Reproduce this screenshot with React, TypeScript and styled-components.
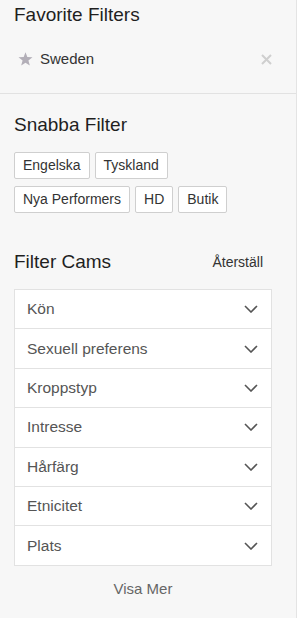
import React from "react";
import styled, { createGlobalStyle } from "styled-components";

const GlobalStyle = createGlobalStyle`
  html, body {
    margin: 0;
    padding: 0;
    background: #f7f7f7;
  }
  body {
    font-family: "Liberation Sans", Arial, Helvetica, sans-serif;
    -webkit-font-smoothing: antialiased;
  }
`;

const quickFilters = [
  ["Engelska", "Tyskland"],
  ["Nya Performers", "HD", "Butik"],
];

const camFilters = [
  "Kön",
  "Sexuell preferens",
  "Kroppstyp",
  "Intresse",
  "Hårfärg",
  "Etnicitet",
  "Plats",
];

const StarIcon = () => (
  <svg width="15" height="14" viewBox="0 0 24 23">
    <polygon
      points="12,0.5 15,8.4 23.5,8.7 16.8,14 19.1,22.3 12,17.5 4.9,22.3 7.2,14 0.5,8.7 9,8.4"
      fill="#b3afb8"
    />
  </svg>
);

const CloseIcon = () => (
  <svg width="11" height="11" viewBox="0 0 11 11">
    <path d="M1 1 L10 10 M10 1 L1 10" stroke="#cfcfcf" strokeWidth="2" />
  </svg>
);

const Chevron = () => (
  <svg width="14" height="8" viewBox="0 0 14 8">
    <polyline
      points="1,1 7,7 13,1"
      fill="none"
      stroke="#555"
      strokeWidth="1.6"
    />
  </svg>
);

const App: React.FC = () => {
  return (
    <>
      <GlobalStyle />
      <StyleSidebar>
        <StyleFavorites>
          <StyleHeading>Favorite Filters</StyleHeading>
          <StyleFavRow>
            <StyleFavName>
              <StarIcon />
              <span>Sweden</span>
            </StyleFavName>
            <CloseIcon />
          </StyleFavRow>
        </StyleFavorites>

        <StyleSection>
          <StyleHeading>Snabba Filter</StyleHeading>
          <StyleTagWrap>
            {quickFilters.map((row, i) => (
              <StyleTagRow key={i}>
                {row.map((tag) => (
                  <StyleTag key={tag}>{tag}</StyleTag>
                ))}
              </StyleTagRow>
            ))}
          </StyleTagWrap>
        </StyleSection>

        <StyleSection>
          <StyleHeaderRow>
            <StyleHeading>Filter Cams</StyleHeading>
            <StyleReset>Återställ</StyleReset>
          </StyleHeaderRow>
          <StyleAccordion>
            {camFilters.map((item) => (
              <StyleAccordionRow key={item}>
                <span>{item}</span>
                <Chevron />
              </StyleAccordionRow>
            ))}
          </StyleAccordion>
          <StyleMore>Visa Mer</StyleMore>
        </StyleSection>
      </StyleSidebar>
    </>
  );
};

const StyleSidebar = styled.div`
  width: 296px;
  min-height: 618px;
  background: #f7f7f7;
  border-right: 1px solid #e4e4e4;
  box-sizing: content-box;
`;

const StyleHeading = styled.h2`
  margin: 0;
  font-size: 19px;
  font-weight: 400;
  line-height: 24px;
  color: #1f1f1f;
`;

const StyleFavorites = styled.div`
  padding: 3px 24px 24px 14px;
  border-bottom: 1px solid #e2e2e2;
`;

const StyleFavRow = styled.div`
  margin-top: 22px;
  height: 20px;
  display: flex;
  align-items: center;
  justify-content: space-between;
  padding-left: 4px;
`;

const StyleFavName = styled.div`
  display: flex;
  align-items: center;
  gap: 7px;
  font-size: 15px;
  line-height: 20px;
  color: #333;
  svg {
    margin-top: -1px;
  }
`;

const StyleSection = styled.div`
  padding: 19px 24px 0 14px;
`;

const StyleTagWrap = styled.div`
  margin-top: 15px;
  display: flex;
  flex-direction: column;
  gap: 7px;
  margin-bottom: 18px;
`;

const StyleTagRow = styled.div`
  display: flex;
  gap: 5px;
`;

const StyleTag = styled.span`
  display: inline-block;
  padding: 0 8px;
  height: 25px;
  line-height: 25px;
  font-size: 14px;
  color: #333;
  background: #fff;
  border: 1px solid #cfcfcf;
  border-radius: 2px;
`;

const StyleHeaderRow = styled.div`
  display: flex;
  align-items: center;
  justify-content: space-between;
  padding-right: 9px;
`;

const StyleReset = styled.span`
  font-size: 14px;
  line-height: 16px;
  color: #333;
`;

const StyleAccordion = styled.div`
  margin-top: 15px;
  background: #fff;
  border: 1px solid #e2e2e2;
`;

const StyleAccordionRow = styled.div`
  height: 38.4px;
  display: flex;
  align-items: center;
  justify-content: space-between;
  padding: 0 13px 0 12px;
  font-size: 15.5px;
  color: #555;
  & + & {
    border-top: 1px solid #e2e2e2;
  }
`;

const StyleMore = styled.div`
  margin-top: 13px;
  text-align: center;
  font-size: 15px;
  line-height: 20px;
  color: #666;
`;

export default App;
